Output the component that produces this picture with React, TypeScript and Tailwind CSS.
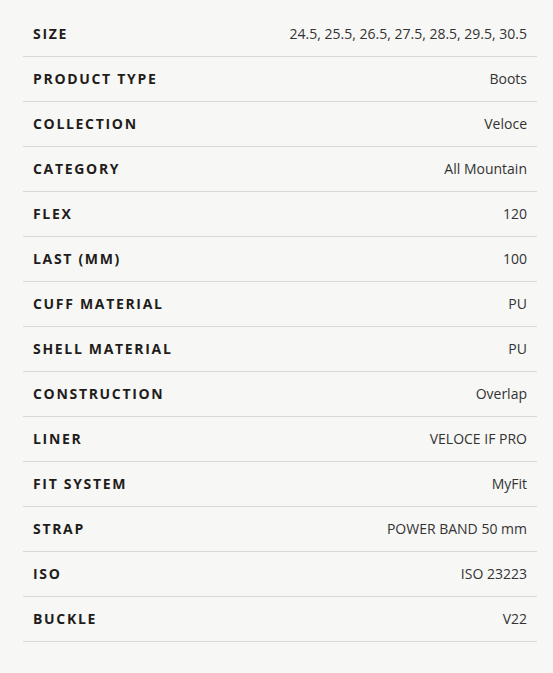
import React from 'react';

const specs: [string, string][] = [
  ['Size', '24.5, 25.5, 26.5, 27.5, 28.5, 29.5, 30.5'],
  ['Product type', 'Boots'],
  ['Collection', 'Veloce'],
  ['Category', 'All Mountain'],
  ['Flex', '120'],
  ['Last (mm)', '100'],
  ['Cuff material', 'PU'],
  ['Shell material', 'PU'],
  ['Construction', 'Overlap'],
  ['Liner', 'VELOCE IF PRO'],
  ['Fit system', 'MyFit'],
  ['Strap', 'POWER BAND 50 mm'],
  ['ISO', 'ISO 23223'],
  ['Buckle', 'V22'],
];

const App: React.FC = () => {
  return (
    <div className="min-h-screen bg-[#f7f7f5] pt-[12px] font-['Open_Sans',sans-serif]">
      <div className="ml-[23px] mr-[16px]">
        {specs.map(([label, value]) => (
          <div
            key={label}
            className="flex h-[45px] items-center justify-between border-b border-[#d9d9d7] px-[10px] pb-[2px]"
          >
            <span className="text-[14px] font-bold uppercase tracking-[0.12em] text-[#1f1d1b]">
              {label}
            </span>
            <span className="text-[14px] text-[#333]">{value}</span>
          </div>
        ))}
      </div>
    </div>
  );
};

export default App;
